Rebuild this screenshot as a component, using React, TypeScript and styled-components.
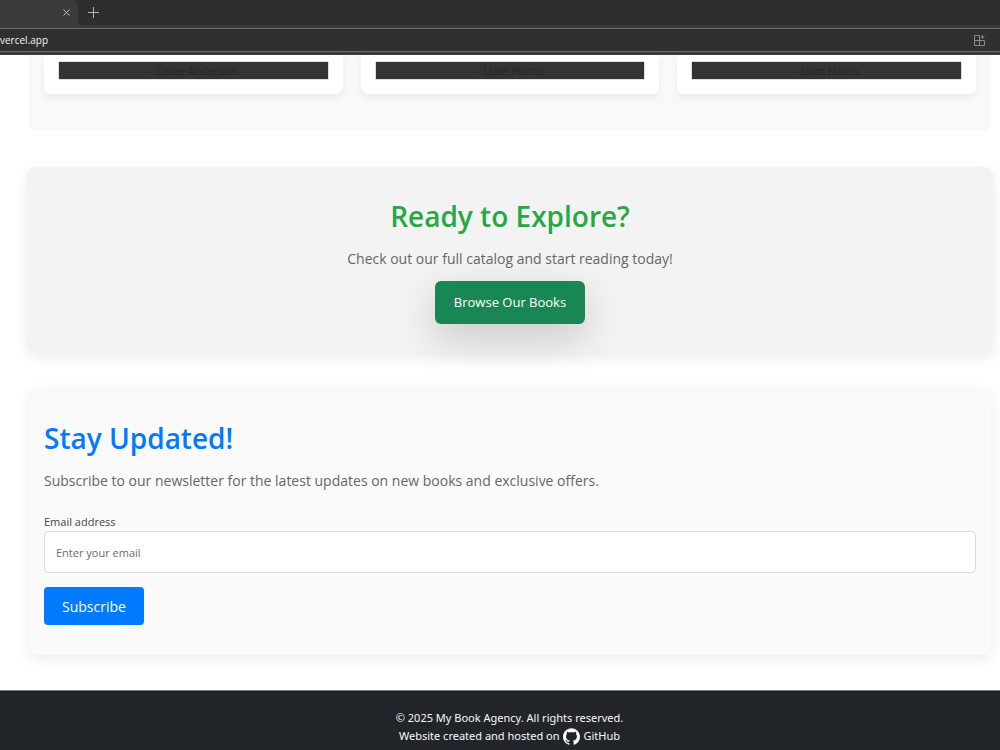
import React from 'react';
import styled, { createGlobalStyle } from 'styled-components';
import { SiGithub } from 'react-icons/si';

const GlobalStyle = createGlobalStyle`
  *, *::before, *::after { box-sizing: border-box; }
  body {
    margin: 0;
    background: #ffffff;
    color: #212529;
    font-family: "Segoe UI", "Open Sans", "Noto Sans", sans-serif;
    font-size: 14px;
  }
  h2, p { margin: 0; }
`;

const Page = styled.div`
  min-height: 100vh;
  display: flex;
  flex-direction: column;
`;

const BrowserBar = styled.header`
  background: #3b3b3b;
  padding-bottom: 3px;
`;

const TabStrip = styled.div`
  display: flex;
  align-items: center;
  height: 25px;
  background: #2e2e2e;
`;

const Tab = styled.div`
  display: flex;
  align-items: center;
  justify-content: flex-end;
  width: 78px;
  height: 25px;
  padding-right: 7px;
  background: #3b3b3b;
  border-radius: 0 5px 0 0;
`;

const ChromeButton = styled.button`
  display: flex;
  align-items: center;
  justify-content: center;
  padding: 0;
  border: 0;
  background: none;
  color: ${({ $color }: { $color: string }) => $color};
`;

const NewTab = styled(ChromeButton)`
  margin-left: 9px;
`;

const AddressBar = styled.div`
  display: flex;
  align-items: center;
  justify-content: space-between;
  height: 24px;
  margin-top: 3px;
  padding-right: 14px;
  border-top: 1px solid #6c6c6c;
  border-bottom: 1px solid #6c6c6c;
  background: #303030;
  color: #f4f4f4;
  font-size: 10px;
`;

const Main = styled.main`
  display: flex;
  flex-direction: column;
  padding: 0 9px 35px 29px;
`;

const Testimonials = styled.section`
  display: grid;
  grid-template-columns: repeat(3, 1fr);
  gap: 18px;
  padding: 0 15px 37px;
  background: #f7f9fb;
  border-radius: 0 0 8px 8px;
`;

const Testimonial = styled.article`
  padding: 7px 15px 15px;
  background: #ffffff;
  border-radius: 0 0 7px 7px;
  box-shadow: 0 4px 7px rgba(0, 0, 0, 0.06);
`;

const Author = styled.p`
  height: 17px;
  background: #333333;
  color: #23272b;
  font-size: 11px;
  line-height: 18px;
  text-align: center;
  box-shadow: 0 0 1px #333333;
`;

const Panel = styled.section`
  padding: 29px 15px;
  border-radius: 9px;
  box-shadow: 0 4px 14px rgba(0, 0, 0, 0.08);
`;

const Explore = styled(Panel)`
  display: flex;
  flex-direction: column;
  align-items: center;
  margin: 36px -2px 0;
  background: #f3f3f3;
`;

const Newsletter = styled(Panel)`
  margin-top: 35px;
  padding: 30px 15px;
  background: #fafafa;
`;

const Title = styled.h2<{ $color: string }>`
  margin-bottom: 14px;
  color: ${({ $color }) => $color};
  font-size: 28px;
  font-weight: 600;
  line-height: 40px;
`;

const Lead = styled.p`
  color: #666666;
  font-size: 14px;
  line-height: 18px;
`;

const BrowseLink = styled.a`
  margin-top: 13px;
  padding: 0 19px;
  background: #198754;
  color: #ffffff;
  border-radius: 6px;
  box-shadow: 0 14px 40px rgba(0, 0, 0, 0.18);
  font-size: 13px;
  line-height: 43px;
  text-decoration: none;
`;

const Form = styled.form`
  display: flex;
  flex-direction: column;
  align-items: flex-start;
  margin-top: 23px;
`;

const Label = styled.label`
  color: #444444;
  font-size: 11px;
  line-height: 18px;
`;

const EmailInput = styled.input`
  width: 100%;
  height: 42px;
  padding: 0 11px;
  border: 1px solid #d9d9d9;
  border-radius: 4px;
  background: #ffffff;
  font-family: inherit;
  font-size: 11px;
  &::placeholder { color: #6c6c6c; opacity: 1; }
`;

const SubscribeButton = styled.button`
  height: 38px;
  margin-top: 14px;
  padding: 0 18px;
  border: 0;
  border-radius: 4px;
  background: #007bff;
  color: #ffffff;
  font-family: inherit;
  font-size: 14px;
`;

const Footer = styled.footer`
  flex: 1;
  padding: 18px 0 5px 19px;
  border-top: 1px solid #6f8274;
  background: #212529;
  color: #f8f9fa;
  font-family: "Segoe UI", "Noto Sans", sans-serif;
  font-size: 11px;
  line-height: 18px;
`;

const FooterLine = styled.p`
  display: flex;
  align-items: center;
  justify-content: center;
  gap: 4px;
  height: 18px;
`;

const GithubLink = styled.a`
  display: flex;
  align-items: center;
  gap: 3px;
  color: inherit;
  text-decoration: none;
`;

const authors = ['Chloe Anderson', 'Liam Harris', 'Liam Harris'];

export default function App() {
  return (
    <Page>
      <GlobalStyle />
      <BrowserBar>
        <TabStrip>
          <Tab>
            <ChromeButton $color="#c0c0c0" aria-label="Close tab">
              <svg width="9" height="9" viewBox="0 0 9 9" fill="none" stroke="currentColor">
                <path d="M1.5 1.5l6 6M7.5 1.5l-6 6" />
              </svg>
            </ChromeButton>
          </Tab>
          <NewTab $color="#b4b4b4" aria-label="New tab">
            <svg width="13" height="13" viewBox="0 0 13 13" fill="none" stroke="currentColor">
              <path d="M6.5 1v11M1 6.5h11" />
            </svg>
          </NewTab>
        </TabStrip>
        <AddressBar>
          <span>vercel.app</span>
          <ChromeButton $color="#8a8a8a" aria-label="Extensions">
            <svg width="13" height="13" viewBox="0 0 13 13" fill="none" stroke="currentColor">
              <path d="M6.5 1.5h-5v10h10v-5h-10M6.5 1.5v10M9.5 1v4M7.5 3h4" />
            </svg>
          </ChromeButton>
        </AddressBar>
      </BrowserBar>
      <Main>
        <Testimonials>
          {authors.map((name, i) => (
            <Testimonial key={i}>
              <Author>- {name}</Author>
            </Testimonial>
          ))}
        </Testimonials>
        <Explore>
          <Title $color="#28a745">Ready to Explore?</Title>
          <Lead>Check out our full catalog and start reading today!</Lead>
          <BrowseLink href="#books">Browse Our Books</BrowseLink>
        </Explore>
        <Newsletter>
          <Title $color="#007bff">Stay Updated!</Title>
          <Lead>Subscribe to our newsletter for the latest updates on new books and exclusive offers.</Lead>
          <Form>
            <Label htmlFor="email">Email address</Label>
            <EmailInput id="email" type="email" placeholder="Enter your email" />
            <SubscribeButton type="button">Subscribe</SubscribeButton>
          </Form>
        </Newsletter>
      </Main>
      <Footer>
        <FooterLine>© 2025 My Book Agency. All rights reserved.</FooterLine>
        <FooterLine>
          Website created and hosted on
          <GithubLink href="#github">
            <SiGithub size={17} aria-hidden />
            GitHub
          </GithubLink>
        </FooterLine>
      </Footer>
    </Page>
  );
}
